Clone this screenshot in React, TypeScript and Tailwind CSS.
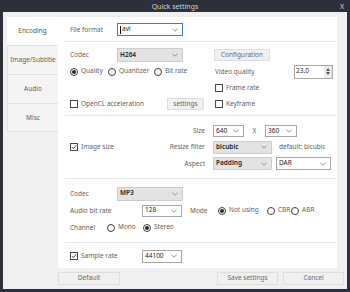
import React from "react";

const font = { fontFamily: '"Noto Sans", "Open Sans", "Liberation Sans", sans-serif' };

function Chevron() {
  return (
    <svg width="6" height="4" viewBox="0 0 6 4" className="shrink-0">
      <polyline points="0.5,0.8 3,3.2 5.5,0.8" fill="none" stroke="#7a7a7a" strokeWidth="0.8" />
    </svg>
  );
}

function Select({ value, w, h, gray, bold }: { value: string; w: string; h: string; gray?: boolean; bold?: boolean }) {
  return (
    <div
      className={`${w} ${h} flex items-center justify-between pl-[2px] pr-[4px] border ${
        gray ? "bg-[#e3e3e3] border-[#cdcdcd]" : "bg-white border-[#a8a8a8]"
      }`}
    >
      <span className={`text-[#1e1e1e] leading-none ${bold ? "font-semibold" : ""}`}>{value}</span>
      <Chevron />
    </div>
  );
}

function Check({ checked, label }: { checked?: boolean; label: string }) {
  return (
    <div className="flex items-center gap-[3px]">
      <div className="w-[8px] h-[8px] border border-[#4a4a4a] bg-white flex items-center justify-center">
        {checked && (
          <svg width="6" height="6" viewBox="0 0 6 6">
            <polyline points="0.8,3 2.4,4.6 5.3,1.2" fill="none" stroke="#3a3a3a" strokeWidth="0.9" />
          </svg>
        )}
      </div>
      <span className="leading-none whitespace-nowrap">{label}</span>
    </div>
  );
}

function Radio({ checked, label }: { checked?: boolean; label: string }) {
  return (
    <div className="flex items-center gap-[3px]">
      <div className="w-[8px] h-[8px] rounded-full border border-[#3f3f3f] bg-white flex items-center justify-center">
        {checked && <div className="w-[4px] h-[4px] rounded-full bg-[#2a2a2a]" />}
      </div>
      <span className="leading-none whitespace-nowrap">{label}</span>
    </div>
  );
}

function Btn({ label, w, h }: { label: string; w: string; h: string }) {
  return (
    <div className={`${w} ${h} flex items-center justify-center bg-[#f0f0f0] border border-[#dedede] text-[#6a6a6a] leading-none`}>
      {label}
    </div>
  );
}

function Sep() {
  return <div className="ml-[7px] mr-[1px] h-px bg-[#e6e6e6]" />;
}

export default function App() {
  return (
    <div className="w-[350px] h-[292px] bg-[#2b303b] flex flex-col text-[6.5px] text-[#5f5f5f] overflow-hidden whitespace-nowrap" style={font}>
      {/* title bar */}
      <div className="h-[12px] relative flex items-center justify-center text-[#cfd2d8]">
        <span className="leading-none text-[7px]">Quick settings</span>
        <span className="absolute right-[6px] top-[3px] leading-none text-[7px]">X</span>
      </div>
      {/* body */}
      <div className="mx-[3px] h-[277px] bg-[#f0f0f0] flex flex-col">
        <div className="flex pt-[5px]">
          {/* sidebar */}
          <div className="ml-[4px] w-[51px] flex flex-col">
            <div className="h-[28px] bg-white flex items-center justify-center text-[#555]">Encoding</div>
            <div className="h-[29px] bg-[#f4f4f4] border-l border-t border-[#e2e2e2] flex items-center justify-center">Image/Subtitle</div>
            <div className="h-[29px] bg-[#f4f4f4] border-l border-t border-[#e2e2e2] flex items-center justify-center">Audio</div>
            <div className="h-[29px] bg-[#f4f4f4] border-l border-t border-b border-[#e2e2e2] flex items-center justify-center">Misc</div>
          </div>
          {/* panel */}
          <div className="w-[279px] h-[251px] bg-white flex flex-col pt-[6px]">
            {/* file format */}
            <div className="h-[13px] flex items-center pl-[12px]">
              <div className="w-[47px]">File format</div>
              <div className="w-[66px] h-[13px] border border-[#2f7fd8] bg-white flex items-center justify-between pl-[2px] pr-[4px]">
                <span className="flex items-center text-[#1e1e1e] leading-none">
                  <span className="w-px h-[8px] bg-black mr-[1px]" />avi
                </span>
                <Chevron />
              </div>
            </div>
            <div className="mt-[5px]"><Sep /></div>
            {/* video section */}
            <div className="mt-[5px] flex pl-[12px]">
              <div className="w-[143px] flex flex-col">
                <div className="h-[16px] flex items-center">
                  <div className="w-[47px]">Codec</div>
                  <Select value="H264" w="w-[66px]" h="h-[14px]" gray bold />
                </div>
                <div className="h-[17px] flex items-center">
                  <div className="w-[38px]"><Radio checked label="Quality" /></div>
                  <div className="w-[46px]"><Radio label="Quantizer" /></div>
                  <Radio label="Bit rate" />
                </div>
                <div className="h-[16px]" />
                <div className="h-[16px] flex items-center">
                  <div className="w-[97px]"><Check label="OpenCL acceleration" /></div>
                  <Btn label="settings" w="w-[37px]" h="h-[12px]" />
                </div>
              </div>
              <div className="flex flex-col pl-[1px]">
                <div className="h-[16px] flex items-center">
                  <Btn label="Configuration" w="w-[56px]" h="h-[12px]" />
                </div>
                <div className="h-[17px] flex items-center pl-[1px]">
                  <div className="w-[79px]">Video quality</div>
                  <div className="w-[39px] h-[14px] border border-[#a8a8a8] bg-white flex items-stretch">
                    <div className="flex-1 flex items-center pl-[1px] text-[#1e1e1e] leading-none">23.0</div>
                    <div className="w-[8px] flex flex-col items-center justify-center gap-[1px] bg-[#ececec]">
                      <svg width="4" height="3" viewBox="0 0 4 3"><polygon points="0,3 2,0 4,3" fill="#555" /></svg>
                      <svg width="4" height="3" viewBox="0 0 4 3"><polygon points="0,0 2,3 4,0" fill="#555" /></svg>
                    </div>
                  </div>
                </div>
                <div className="h-[16px] flex items-center pl-[1px]"><Check label="Frame rate" /></div>
                <div className="h-[16px] flex items-center pl-[1px]"><Check label="Keyframe" /></div>
              </div>
            </div>
            <div className="mt-[3px]"><Sep /></div>
            {/* image size section */}
            <div className="mt-[7px] flex flex-col pl-[12px]">
              <div className="h-[16px] flex items-center">
                <div className="w-[80px]" />
                <div className="w-[55px] text-right">Size</div>
                <div className="ml-[8px] flex items-center">
                  <Select value="640" w="w-[31px]" h="h-[12px]" />
                  <div className="w-[21px] text-center">X</div>
                  <Select value="360" w="w-[32px]" h="h-[12px]" />
                </div>
              </div>
              <div className="h-[16px] flex items-center">
                <div className="w-[80px]"><Check checked label="Image size" /></div>
                <div className="w-[55px] text-right">Resize filter</div>
                <div className="ml-[8px] flex items-center">
                  <Select value="bicubic" w="w-[59px]" h="h-[13px]" gray bold />
                  <div className="ml-[7px]">default: bicubic</div>
                </div>
              </div>
              <div className="h-[17px] flex items-center">
                <div className="w-[80px]" />
                <div className="w-[55px] text-right">Aspect</div>
                <div className="ml-[8px] flex items-center">
                  <Select value="Padding" w="w-[59px]" h="h-[13px]" gray bold />
                  <div className="ml-[4px]"><Select value="DAR" w="w-[55px]" h="h-[13px]" /></div>
                </div>
              </div>
            </div>
            <div className="mt-[6px]"><Sep /></div>
            {/* audio section */}
            <div className="mt-[6px] flex flex-col pl-[12px]">
              <div className="h-[17px] flex items-center">
                <div className="w-[47px]">Codec</div>
                <Select value="MP3" w="w-[66px]" h="h-[14px]" gray bold />
              </div>
              <div className="h-[17px] flex items-center">
                <div className="w-[72px]">Audio bit rate</div>
                <Select value="128" w="w-[40px]" h="h-[12px]" />
                <div className="ml-[8px] w-[28px]">Mode</div>
                <div className="w-[49px]"><Radio checked label="Not using" /></div>
                <div className="w-[24px]"><Radio label="CBR" /></div>
                <Radio label="ABR" />
              </div>
              <div className="h-[17px] flex items-center">
                <div className="w-[37px]">Channel</div>
                <div className="w-[36px]"><Radio label="Mono" /></div>
                <Radio checked label="Stereo" />
              </div>
            </div>
            <div className="mt-[6px]"><Sep /></div>
            <div className="mt-[5px] h-[16px] flex items-center pl-[12px]">
              <div className="w-[72px]"><Check checked label="Sample rate" /></div>
              <Select value="44100" w="w-[40px]" h="h-[13px]" />
            </div>
          </div>
        </div>
        {/* bottom buttons */}
        <div className="mt-[4px] flex items-center">
          <div className="ml-[55px]"><Btn label="Default" w="w-[62px]" h="h-[13px]" /></div>
          <div className="ml-auto flex gap-[5px] mr-[3px]">
            <Btn label="Save settings" w="w-[61px]" h="h-[13px]" />
            <Btn label="Cancel" w="w-[61px]" h="h-[13px]" />
          </div>
        </div>
      </div>
    </div>
  );
}
